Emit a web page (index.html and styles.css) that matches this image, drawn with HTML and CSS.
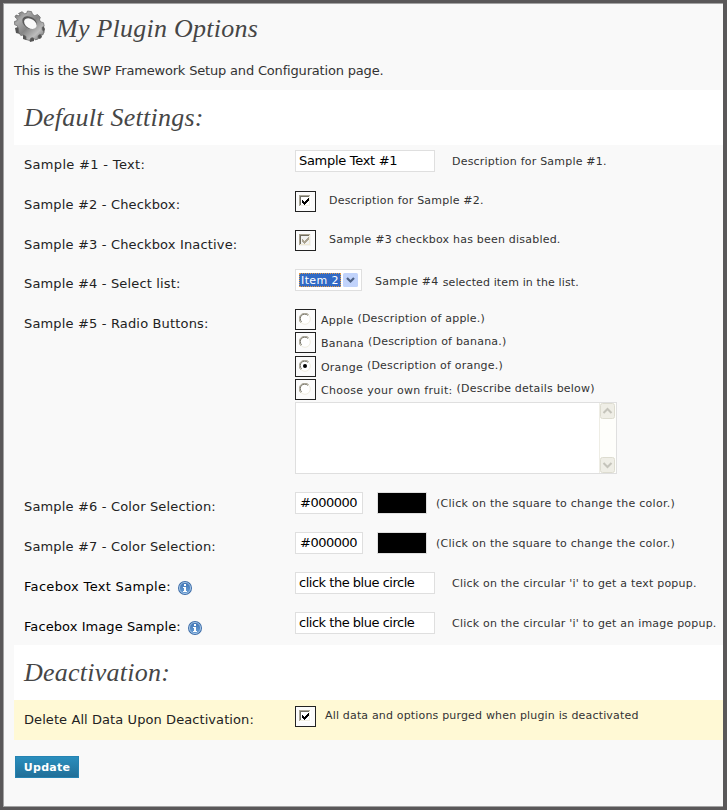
FILE: index.html
```html
<!DOCTYPE html>
<html lang="en">
<head>
<meta charset="utf-8">
<title>My Plugin Options</title>
<link rel="stylesheet" href="styles.css">
</head>
<body>
<svg width="0" height="0" class="defs">
  <defs>
    <linearGradient id="metal" x1="0" y1="0" x2="1" y2="1"><stop offset="0" stop-color="#6a6a6a"/><stop offset=".25" stop-color="#aaa"/><stop offset=".5" stop-color="#858585"/><stop offset=".75" stop-color="#bdbdbd"/><stop offset="1" stop-color="#606060"/></linearGradient>
    <linearGradient id="blue" x1="0" y1="0" x2="0" y2="1"><stop offset="0" stop-color="#3f74b4"/><stop offset="1" stop-color="#6a9fd6"/></linearGradient>
    <symbol id="check" viewBox="0 0 12 12">
      <path fill="#fff" d="M0 0h12v12H0z"/><path fill="#aca899" d="M0 0h11v1H1v10H0z"/><path fill="#716f64" d="M1 1h9v1H2v8H1z"/><path fill="#f1efe2" d="M10 1h1v10H1v-1h9z"/>
      <path class="tick" d="M3 5h1v1h1v1h1V6h1V5h1V4h1V3h1v3H9v1H8v1H7v1H6v1H5V9H4V8H3z"/>
    </symbol>
    <symbol id="radio" viewBox="0 0 12 12">
      <circle cx="6" cy="6" r="5.3" fill="#fff" stroke="#eeecdf" stroke-width="1"/>
      <path d="M1.8 9.8A5.3 5.3 0 0 1 9.8 1.8" fill="none" stroke="#aca899"/><path d="M2.6 8.8A4.4 4.4 0 0 1 8.8 2.4" fill="none" stroke="#716f64"/>
    </symbol>
    <symbol id="info" viewBox="0 0 14 14">
      <circle cx="7" cy="7" r="7" fill="#3c6ca8"/><circle cx="7" cy="7" r="5.6" fill="url(#blue)" stroke="#a9c8e8" stroke-width=".9"/>
      <path fill="#fff" d="M6 3h2v2H6zM5 6h3v4h1v1H5v-1h1V7H5z"/>
    </symbol>
  </defs>
</svg>
<main class="page">
  <header class="title">
    <svg class="gear" viewBox="0 0 32 32">
      <path fill="#555" d="M1 11l2 1 1 5-3 1 1 5 4 1 3 1 0 4 3 1 3-1 1 3 4-1 0-3 3 0 3 1 2-2-1-4 3 0 1-4-2-4z"/>
      <path fill="url(#metal)" stroke="#666" stroke-width=".7" d="M4.500 3.500L8 1.700l2.500 2 2-.2 1-2.500 4 .6 1 2.700 2.300 1.400 2.700-1.200 2.800 2.700-.8 2.700 1.300 2 2.700.8.700 3.500-2.200 1.200.3 2.300 1.800 2.300-1.300 3-3.200-.5-1.600 1.400.3 3-3 1-2.200-2.200-2.100.3-1.500 2.500-3.500-1 0-3-2.200-1.500-3 .5-2-3L4.200 18l-1-2.300-2.500-.9-.3-3.300 2.400-.8.400-1.700-2.300-2L2 5l3 .8 1.200-.8z"/>
      <ellipse cx="15.600" cy="12.600" rx="8" ry="5.700" transform="rotate(33 15.600 12.600)" fill="#5a5a5a"/>
      <ellipse cx="16.400" cy="13.600" rx="6.900" ry="4.600" transform="rotate(33 16.400 13.600)" fill="#f9f9f9"/>
    </svg>
    <h1>My Plugin Options</h1>
  </header>
  <p class="intro">This is the SWP Framework Setup and Configuration page.</p>

  <h2>Default Settings:</h2>
  <div class="row">
    <label class="loose">Sample #1 - Text:</label>
    <div class="field"><span class="input wide text">Sample Text #1</span><span class="desc after-wide">Description for Sample #1.</span></div>
  </div>
  <div class="row check">
    <label>Sample #2 - Checkbox:</label>
    <div class="field"><span class="box"><svg><use href="#check"/></svg></span><span class="desc">Description for Sample #2.</span></div>
  </div>
  <div class="row check inactive">
    <label>Sample #3 - Checkbox Inactive:</label>
    <div class="field"><span class="box off"><svg><use href="#check"/></svg></span><span class="desc">Sample #3 checkbox has been disabled.</span></div>
  </div>
  <div class="row list">
    <label>Sample #4 - Select list:</label>
    <div class="field">
      <span class="select"><span class="chosen">Item 2</span><svg class="arrow" viewBox="0 0 15 14"><rect width="15" height="14" rx="1.500" fill="#c1d3fb"/><path d="M4 5l3.500 3.500L11 5" fill="none" stroke="#4d6185" stroke-width="2.200"/></svg></span>
      <span class="desc name">Sample #4</span><span class="desc low">selected item in the list.</span>
    </div>
  </div>
  <div class="row radios">
    <label>Sample #5 - Radio Buttons:</label>
    <div class="options">
      <div class="option"><span class="box"><svg><use href="#radio"/></svg></span><span class="desc opt">Apple</span><span class="desc">(Description of apple.)</span></div>
      <div class="option gap"><span class="box"><svg><use href="#radio"/></svg></span><span class="desc opt">Banana</span><span class="desc">(Description of banana.)</span></div>
      <div class="option"><span class="box"><svg><use href="#radio"/><circle cx="6" cy="6" r="2"/></svg></span><span class="desc opt">Orange</span><span class="desc">(Description of orange.)</span></div>
      <div class="option"><span class="box"><svg><use href="#radio"/></svg></span><span class="desc opt own">Choose your own fruit:</span><span class="desc">(Describe details below)</span></div>
      <div class="area"><div class="scroll">
        <svg viewBox="0 0 15 16"><rect x=".5" y=".5" width="14" height="15" rx="2" fill="#efeee6" stroke="#dddcd0"/><path d="M3.500 10l4-4 4 4" fill="none" stroke="#c5c4bb" stroke-width="2"/></svg>
        <svg viewBox="0 0 15 16"><rect x=".5" y=".5" width="14" height="15" rx="2" fill="#efeee6" stroke="#dddcd0"/><path d="M3.500 6l4 4 4-4" fill="none" stroke="#c5c4bb" stroke-width="2"/></svg>
      </div></div>
    </div>
  </div>
  <div class="row">
    <label>Sample #6 - Color Selection:</label>
    <div class="field"><span class="input hex">#000000</span><span class="swatch"></span><span class="desc hint">(Click on the square to change the color.)</span></div>
  </div>
  <div class="row">
    <label>Sample #7 - Color Selection:</label>
    <div class="field"><span class="input hex">#000000</span><span class="swatch"></span><span class="desc hint">(Click on the square to change the color.)</span></div>
  </div>
  <div class="row">
    <label class="strong loose">Facebox Text Sample:<svg class="info"><use href="#info"/></svg></label>
    <div class="field"><span class="input wide">click the blue circle</span><span class="desc after-wide">Click on the circular 'i' to get a text popup.</span></div>
  </div>
  <div class="row last">
    <label class="strong tight">Facebox Image Sample:<svg class="info"><use href="#info"/></svg></label>
    <div class="field"><span class="input wide">click the blue circle</span><span class="desc after-wide">Click on the circular 'i' to get an image popup.</span></div>
  </div>

  <h2>Deactivation:</h2>
  <div class="row check warn">
    <label class="tight">Delete All Data Upon Deactivation:</label>
    <div class="field"><span class="box"><svg><use href="#check"/></svg></span><span class="desc">All data and options purged when plugin is deactivated</span></div>
  </div>
  <button class="update">Update</button>
</main>
</body>
</html>
```
FILE: styles.css
```css
* { box-sizing: border-box; }
body {
  margin: 0;
  height: 810px;
  padding: 3px 4px 3px 3px;
  background: #5a5859;
  font: 13px "DejaVu Sans", sans-serif;
  color: #222;
}
.defs { position: absolute; }
svg { display: block; flex: none; }
.page {
  height: 804px;
  overflow: hidden;
  padding-left: 10px;
  background: #f9f9f9;
  border: solid #a3a3a3;
  border-width: 1px 0 1px 1px;
}
.title { display: flex; height: 55px; padding-top: 6px; }
.gear { width: 32px; height: 32px; margin-right: 10px; }
h1, h2 {
  margin: 0;
  font: italic 26px/32px "Liberation Serif", serif;
  color: #464646;
  white-space: nowrap;
}
h1 { letter-spacing: .25px; margin-top: 3px; }
.intro { margin: 0; height: 31px; padding-top: 2px; line-height: 20px; letter-spacing: -.18px; color: #333; white-space: nowrap; }
h2 { height: 55px; padding: 12px 0 0 10px; background: #fff; letter-spacing: .25px; }
.row {
  display: grid;
  grid-template-columns: 271px 1fr;
  height: 40px;
  padding-left: 10px;
  white-space: nowrap;
}
label { padding-top: 10px; line-height: 20px; letter-spacing: .16px; }
.loose { letter-spacing: .32px; }
.tight { letter-spacing: .08px; }
.strong { display: flex; color: #000; }
.info { width: 14px; height: 14px; margin: 4px 0 0 7px; }
.field { display: flex; align-items: flex-start; padding-top: 5px; }
.input {
  height: 22px;
  padding: 0 3px;
  border: 1px solid #dfdfdf;
  background: #fff;
  color: #000;
  line-height: 19px;
  letter-spacing: -.48px;
}
.wide { width: 140px; }
.text { letter-spacing: -.3px; }
.hex { width: 68px; padding-left: 4px; }
.desc { margin-top: 4px; font-size: 11px; line-height: 16px; letter-spacing: .21px; color: #333; }
.after-wide { margin-left: 17px; }
.hint { letter-spacing: .27px; }
.swatch { width: 50px; height: 22px; margin: 0 9px 0 14px; background: #000; border: 1px solid #dfdfdf; }
.box {
  display: flex;
  width: 21px;
  height: 21px;
  padding: 3px;
  border: 1px solid #222;
  background: #fbfbfb;
  color: #000;
}
.box svg { width: 12px; height: 12px; }
.tick { fill: currentColor; }
.off { color: #aca899; }
.off svg { filter: sepia(.15) brightness(.95); }
.check .field { padding-top: 6px; }
.check .desc { margin: 2px 0 0 13px; }
.inactive { height: 39px; }
.inactive .field { padding-top: 5px; }
.select {
  display: flex;
  width: 67px;
  height: 22px;
  padding: 3px;
  border: 1px solid #dfdfdf;
  background: #fff;
}
.chosen {
  width: 42px;
  height: 14px;
  margin-right: 2px;
  padding-left: 2px;
  outline: 1px dotted #e39a45;
  outline-offset: -1px;
  background: #316ac5;
  color: #fff;
  font-size: 11px;
  line-height: 16px;
  letter-spacing: .4px;
}
.arrow { width: 15px; height: 14px; }
.list .name { margin: 5px 4px 0 13px; letter-spacing: .3px; }
.list .low { margin-top: 6px; letter-spacing: .12px; }
.radios { height: 183px; }
.options { padding-top: 5px; }
.option { display: flex; height: 23px; }
.gap { height: 24px; }
.option .desc { margin: 2px 0 0 4px; }
.option .opt { margin: 4px 0 0 5px; }
.option .own { letter-spacing: .3px; }
.area {
  display: flex;
  justify-content: flex-end;
  width: 322px;
  height: 72px;
  border: 1px solid #dfdfdf;
  background: #fff;
}
.scroll { display: flex; flex-direction: column; justify-content: space-between; width: 17px; padding: 0 1px 0 0; border-left: 1px solid #eeede5; background: #fefefb; }
.scroll svg { width: 15px; height: 16px; }
.last { height: 38px; }
.warn { background: #fff9d5; }
.warn .desc { margin-left: 9px; letter-spacing: .17px; }
.update {
  display: block;
  width: 64px;
  height: 22px;
  margin: 16px 0 0 1px;
  padding: 0;
  border: 1px solid #2583b2;
  background: linear-gradient(#2a8ebd, #216f98);
  color: #fff;
  font: bold 11px/21px "DejaVu Sans", sans-serif;
  letter-spacing: .25px;
}
```
